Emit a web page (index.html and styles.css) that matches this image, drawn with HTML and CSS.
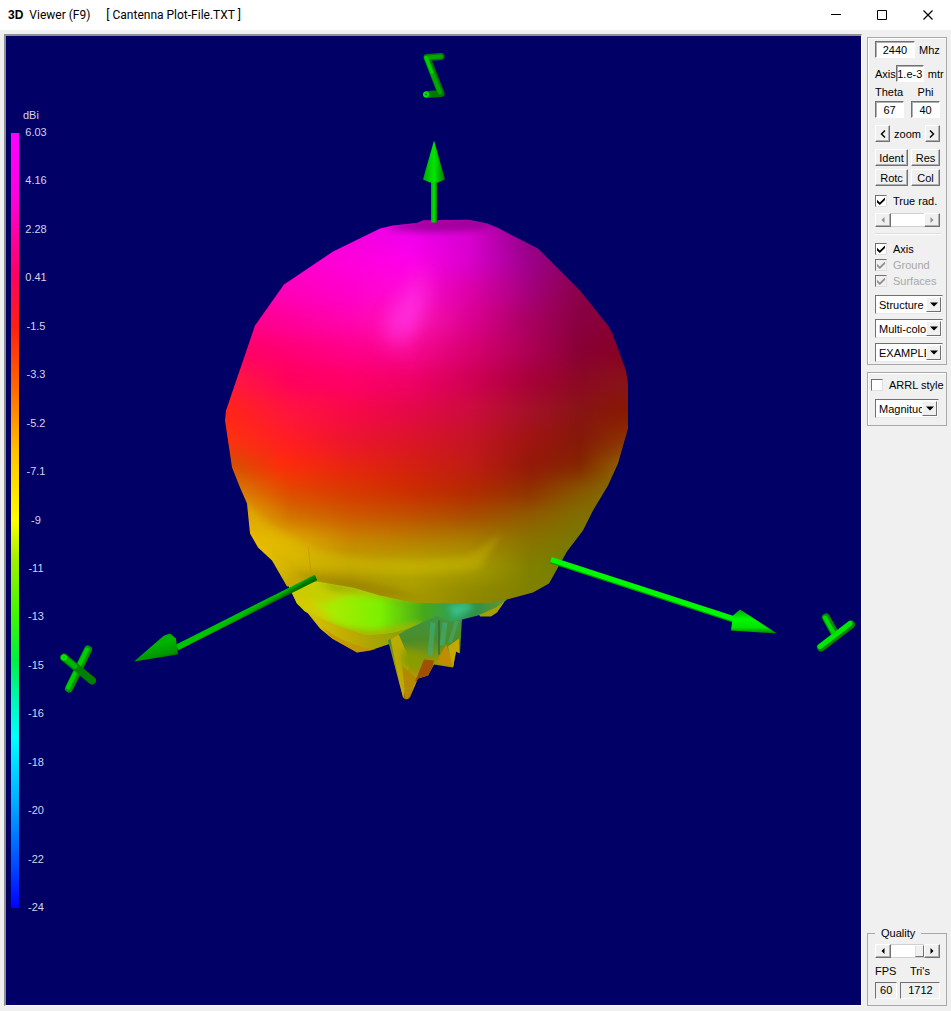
FILE: index.html
```html
<!DOCTYPE html>
<html lang="en">
<head>
<meta charset="utf-8">
<title>3D Viewer (F9)</title>
<link rel="stylesheet" href="styles.css">
</head>
<body>
<header class="titlebar">
  <span class="logo">3D</span>
  <h1 class="title">Viewer (F9)</h1>
  <span class="file">[ Cantenna Plot-File.TXT ]</span>
  <div class="window-buttons">
    <button class="window-button" aria-label="Minimize"><svg width="11" height="11"><path d="M0 4.500H10" stroke="#000"/></svg></button>
    <button class="window-button" aria-label="Maximize"><svg width="11" height="11"><path d="M.5 .5H9.500V9.500H.5Z" stroke="#000" fill="none"/></svg></button>
    <button class="window-button" aria-label="Close"><svg width="11" height="11"><path d="M.5 .5L9.500 9.500M9.500 .5L.5 9.500" stroke="#000" stroke-width="1.200"/></svg></button>
  </div>
</header>
<main class="workspace">
  <section class="plot" aria-label="3D radiation pattern">
    <svg class="scene" viewBox="6 36 855 968" preserveAspectRatio="xMidYMid meet">
      <defs>
        <linearGradient id="r1" gradientUnits="userSpaceOnUse" x1="230" x2="630" y1="0" y2="0"><stop offset="0" stop-color="#ff00c8"/><stop offset=".15" stop-color="#ff00d0"/><stop offset=".3" stop-color="#f000dc"/><stop offset=".45" stop-color="#f000ee"/><stop offset=".6" stop-color="#d800d0"/><stop offset=".75" stop-color="#900080"/><stop offset="1" stop-color="#800050"/></linearGradient>
        <linearGradient id="r2" href="#r1"><stop offset="0" stop-color="#ff00b8"/><stop offset=".15" stop-color="#ff00cc"/><stop offset=".3" stop-color="#ff00dc"/><stop offset=".45" stop-color="#ff00ea"/><stop offset=".6" stop-color="#d800cc"/><stop offset=".75" stop-color="#9c008c"/><stop offset=".875" stop-color="#850055"/></linearGradient>
        <linearGradient id="r3" href="#r1"><stop offset="0" stop-color="#ff00a0"/><stop offset=".15" stop-color="#ff00bc"/><stop offset=".3" stop-color="#ff00cc"/><stop offset=".45" stop-color="#ff0cd8"/><stop offset=".6" stop-color="#dc00a8"/><stop offset=".75" stop-color="#a4007c"/><stop offset=".875" stop-color="#8a0048"/></linearGradient>
        <linearGradient id="r4" href="#r1"><stop offset="0" stop-color="#ff0080"/><stop offset=".15" stop-color="#ff009c"/><stop offset=".3" stop-color="#ff04b0"/><stop offset=".45" stop-color="#ff18b8"/><stop offset=".6" stop-color="#dc0090"/><stop offset=".75" stop-color="#a80060"/><stop offset=".875" stop-color="#880040"/><stop offset="1" stop-color="#880030"/></linearGradient>
        <linearGradient id="r5" href="#r1"><stop offset="0" stop-color="#ff0060"/><stop offset=".15" stop-color="#ff0074"/><stop offset=".3" stop-color="#ff0088"/><stop offset=".45" stop-color="#f80890"/><stop offset=".6" stop-color="#d80070"/><stop offset=".75" stop-color="#ac0054"/><stop offset=".875" stop-color="#880034"/><stop offset="1" stop-color="#880020"/></linearGradient>
        <linearGradient id="r6" href="#r1"><stop offset="0" stop-color="#ff1a40"/><stop offset=".15" stop-color="#ff005c"/><stop offset=".3" stop-color="#ff0068"/><stop offset=".45" stop-color="#f00068"/><stop offset=".6" stop-color="#d00054"/><stop offset=".75" stop-color="#a80038"/><stop offset=".875" stop-color="#8c0824"/><stop offset="1" stop-color="#881418"/></linearGradient>
        <linearGradient id="r7" href="#r1"><stop offset="0" stop-color="#ff2418"/><stop offset=".15" stop-color="#ff1440"/><stop offset=".3" stop-color="#f80848"/><stop offset=".45" stop-color="#e40848"/><stop offset=".6" stop-color="#cc0c3c"/><stop offset=".75" stop-color="#a41028"/><stop offset=".875" stop-color="#881414"/><stop offset="1" stop-color="#881800"/></linearGradient>
        <linearGradient id="r8" href="#r1"><stop offset="0" stop-color="#ff3010"/><stop offset=".15" stop-color="#ff1c24"/><stop offset=".3" stop-color="#ec1430"/><stop offset=".45" stop-color="#dc1428"/><stop offset=".6" stop-color="#c41424"/><stop offset=".75" stop-color="#a01410"/><stop offset=".875" stop-color="#841808"/><stop offset="1" stop-color="#8c3400"/></linearGradient>
        <linearGradient id="r9" href="#r1"><stop offset="0" stop-color="#d05000"/><stop offset=".13" stop-color="#ff2c08"/><stop offset=".3" stop-color="#e82410"/><stop offset=".45" stop-color="#d42010"/><stop offset=".6" stop-color="#c01c14"/><stop offset=".75" stop-color="#941808"/><stop offset=".875" stop-color="#842400"/><stop offset="1" stop-color="#907000"/></linearGradient>
        <linearGradient id="r10" href="#r1"><stop offset="0" stop-color="#d88000"/><stop offset=".15" stop-color="#e04800"/><stop offset=".3" stop-color="#d83800"/><stop offset=".45" stop-color="#cc2c00"/><stop offset=".6" stop-color="#b42800"/><stop offset=".75" stop-color="#903000"/><stop offset=".875" stop-color="#885800"/><stop offset="1" stop-color="#807800"/></linearGradient>
        <linearGradient id="r11" href="#r1"><stop offset="0" stop-color="#e8c000"/><stop offset=".06" stop-color="#dca000"/><stop offset=".15" stop-color="#d07000"/><stop offset=".3" stop-color="#cc5800"/><stop offset=".45" stop-color="#c05000"/><stop offset=".6" stop-color="#a84c00"/><stop offset=".75" stop-color="#905c00"/><stop offset=".875" stop-color="#807000"/></linearGradient>
        <linearGradient id="r12" href="#r1"><stop offset="0" stop-color="#f0c800"/><stop offset=".15" stop-color="#e0b000"/><stop offset=".3" stop-color="#c88800"/><stop offset=".45" stop-color="#b88000"/><stop offset=".6" stop-color="#a88000"/><stop offset=".75" stop-color="#887400"/><stop offset=".875" stop-color="#787800"/></linearGradient>
        <linearGradient id="r13" href="#r1"><stop offset="0" stop-color="#f0d000"/><stop offset=".15" stop-color="#d4b400"/><stop offset=".3" stop-color="#bca400"/><stop offset=".45" stop-color="#b8a800"/><stop offset=".6" stop-color="#aca000"/><stop offset=".75" stop-color="#808000"/><stop offset=".85" stop-color="#708000"/></linearGradient>
        <linearGradient id="r14" href="#r1"><stop offset="0" stop-color="#e0cc00"/><stop offset=".15" stop-color="#c0a400"/><stop offset=".3" stop-color="#a49000"/><stop offset=".45" stop-color="#a89c00"/><stop offset=".6" stop-color="#908800"/><stop offset=".75" stop-color="#808000"/></linearGradient>
        <linearGradient id="lobe" gradientUnits="userSpaceOnUse" x1="290" y1="0" x2="505" y2="0"><stop offset="0" stop-color="#dcd800"/><stop offset=".2" stop-color="#a8ec00"/><stop offset=".42" stop-color="#7cf000"/><stop offset=".62" stop-color="#48a818"/><stop offset=".76" stop-color="#30a058"/><stop offset=".86" stop-color="#309048"/><stop offset="1" stop-color="#609830"/></linearGradient>
        <linearGradient id="under" x1="0" y1="0" x2="1" y2="0"><stop offset="0" stop-color="#e4cc00"/><stop offset=".5" stop-color="#b8a800"/><stop offset="1" stop-color="#709c10"/></linearGradient>
        <linearGradient id="spike" x1="0" y1="0" x2="0" y2="1"><stop offset="0" stop-color="#389850"/><stop offset=".35" stop-color="#4c8c28"/><stop offset=".6" stop-color="#a09c00"/><stop offset=".8" stop-color="#c89800"/><stop offset="1" stop-color="#985400"/></linearGradient>
        <linearGradient id="shaftX" gradientUnits="userSpaceOnUse" x1="244.500" y1="610.500" x2="248" y2="616.500"><stop offset="0" stop-color="#00c400"/><stop offset=".5" stop-color="#00ac00"/><stop offset="1" stop-color="#007000"/></linearGradient>
        <linearGradient id="shaftZ"><stop offset="0" stop-color="#00a800"/><stop offset=".5" stop-color="#00e800"/><stop offset="1" stop-color="#007800"/></linearGradient>
        <linearGradient id="coneY" x1="0" y1="0" x2="0" y2="1"><stop offset="0" stop-color="#00a800"/><stop offset=".4" stop-color="#00f800"/><stop offset=".75" stop-color="#00e400"/><stop offset="1" stop-color="#008000"/></linearGradient>
        <linearGradient id="coneX" x1="0" y1="0" x2=".4" y2="1"><stop offset="0" stop-color="#00a400"/><stop offset=".5" stop-color="#00b400"/><stop offset=".9" stop-color="#009400"/><stop offset="1" stop-color="#006800"/></linearGradient>
        <filter id="mesh" color-interpolation-filters="sRGB" filterUnits="userSpaceOnUse" x="100" y="100" width="660" height="620"><feGaussianBlur stdDeviation="0 10"/></filter>
        <filter id="soft" color-interpolation-filters="sRGB" x="-50%" y="-50%" width="200%" height="200%"><feGaussianBlur stdDeviation="9"/></filter>
        <filter id="fine" color-interpolation-filters="sRGB" x="-40%" y="-60%" width="180%" height="220%"><feGaussianBlur stdDeviation="3"/></filter>
        <clipPath id="bodyClip"><path d="M423 220L450 219.500L467 219L487 223L497 227L538 248L580 290L608 325L612 332L626 370L628 383V428L618 463L608 485L593 510L587 522L583 530L567 551L558 567L549 583L533 592L507 599L487 603H433L413 602L380 595L353 587L317 581L287 586L272 560L258 547L250 533L247 503L240 487L232 467L225 420L226 410L255 325L284 284L333 251L380 228L393 225L417 222.500Z"/></clipPath>
        <clipPath id="lobeClip"><path d="M284 576L353 580L433 596L510 590L506 600L496 607L478 615L462 619L450 621L437 615L420 623Q396 635 365 634L340 626L316 616L305 611L297 603Z"/></clipPath>
        <clipPath id="spikeClip"><path d="M388 640L437 612L462 618L460 653L456 651L453 667L434 664L428 675L418 678L410 697Q406 701 403 697Z"/></clipPath>
      </defs>

      <!-- back lobe -->
      <path d="M287 580L297 603L308 613L320 628L332 638L357 652L370 650L391 643L400 640L430 610Z" fill="url(#under)"/>
      <path d="M322 626L332 638L357 652L376 649Q345 645 322 626Z" fill="#c88800" opacity=".6"/>
      <path d="M478 612L506 595L504 602L497 612L491 616L480 616Z" fill="#a8a000"/>

      <!-- tail -->
      <g clip-path="url(#spikeClip)">
        <rect x="380" y="605" width="90" height="100" fill="url(#spike)"/>
        <path d="M390 636L403 699L410 660L397 630Z" fill="#bcac00"/>
        <path d="M402 665L417 678L406 702Z" fill="#b48800"/>
        <path d="M402 665L420 673L425 655L402 648Z" fill="#889c00" filter="url(#fine)"/>
        <path d="M424 659L434 660L430 677L415 681Z" fill="#a05000"/>
        <path d="M436 662L446 644L455 667Z" fill="#c08c00"/>
        <path d="M448 646L459 638V655L453 667Z" fill="#c4a800"/>
        <path d="M433 622L430 655M445 622L442 645" stroke="#3cb080" stroke-width="5" opacity=".6"/>
        <path d="M439 620L439 654" stroke="#286c40" stroke-width="2" opacity=".7"/>
        <path d="M457 620L450 642" stroke="#48a468" stroke-width="4" opacity=".7"/>
      </g>

      <!-- side lobe ring -->
      <g clip-path="url(#lobeClip)">
        <rect x="270" y="570" width="245" height="75" fill="url(#lobe)"/>
        <path d="M280 582L335 580L430 600L350 594L325 602L290 600Z" fill="#c8c800" filter="url(#fine)" opacity=".8"/>
        <path d="M292 603Q330 630 375 630L418 622L424 628L365 642L300 630Z" fill="#a8b400" filter="url(#fine)"/>
        <path d="M290 590L312 600L335 622L300 615Z" fill="#d8c400" filter="url(#fine)" opacity=".7"/>
        <path d="M317 581L353 587L413 602L400 601L365 592L335 590Z" fill="#889800" filter="url(#fine)" opacity=".7"/>
        <path d="M448 606L465 602L475 606L455 618Z" fill="#38c088" filter="url(#fine)"/>
      </g>

      <!-- main body -->
      <g clip-path="url(#bodyClip)">
        <g filter="url(#mesh)">
          <rect x="180" y="160" width="500" height="88" fill="url(#r1)"/>
          <rect x="180" y="247" width="500" height="29" fill="url(#r2)"/>
          <rect x="180" y="275" width="500" height="31" fill="url(#r3)"/>
          <rect x="180" y="305" width="500" height="31" fill="url(#r4)"/>
          <rect x="180" y="335" width="500" height="31" fill="url(#r5)"/>
          <rect x="180" y="365" width="500" height="31" fill="url(#r6)"/>
          <rect x="180" y="395" width="500" height="31" fill="url(#r7)"/>
          <rect x="180" y="425" width="500" height="29" fill="url(#r8)"/>
          <rect x="180" y="453" width="500" height="26" fill="url(#r9)"/>
          <rect x="180" y="478" width="500" height="26" fill="url(#r10)"/>
          <rect x="180" y="503" width="500" height="26" fill="url(#r11)"/>
          <rect x="180" y="528" width="500" height="26" fill="url(#r12)"/>
          <rect x="180" y="553" width="500" height="26" fill="url(#r13)"/>
          <rect x="180" y="578" width="500" height="80" fill="url(#r14)"/>
        </g>
        <path d="M426 260L430 300L404 350L380 340L396 305Z" fill="#ff30d8" opacity=".5" filter="url(#soft)"/>
        <path d="M420 285L416 318L402 334L386 322L400 304Z" fill="#ff38f0" opacity=".5" filter="url(#soft)"/>
        <path d="M385 228L423 217L470 216L497 226L485 229Q430 235 385 228Z" fill="#90008c" opacity=".75" filter="url(#fine)"/>
        <path d="M245 500Q268 532 325 551Q400 565 470 555L502 532L480 568Q390 582 300 563Q255 545 245 500Z" fill="#e0cc00" opacity=".25" filter="url(#fine)"/>
        <path d="M290 572Q350 577 390 587L430 600L350 592Z" fill="#988000" opacity=".6" filter="url(#fine)"/>
        <path d="M308 546L311 572" stroke="#b88000" opacity=".35" fill="none"/>
      </g>

      <!-- X axis -->
      <path d="M177 647L316 577" stroke="url(#shaftX)" stroke-width="6"/>
      <path d="M134 661L164 635L170 633L176 638L178 654Z" fill="url(#coneX)"/>
      <g fill="none" stroke-linecap="round">
        <path d="M88 649L69 688" stroke="#009400" stroke-width="8"/>
        <path d="M87 649L68 687" stroke="#00d000" stroke-width="4"/>
        <path d="M64 657L92 680" stroke="#008000" stroke-width="8"/>
        <path d="M64 657L75 666" stroke="#00b400" stroke-width="5"/>
        <circle cx="64" cy="657" r="1" stroke="#00f000" stroke-width="4"/>
      </g>

      <!-- Y axis -->
      <path d="M551 560L736 620" stroke="#00a000" stroke-width="6"/>
      <path d="M551 559L736 619" stroke="#00f800" stroke-width="5"/>
      <path d="M777 633L740 609L733 615L731 630Z" fill="url(#coneY)"/>
      <g fill="none" stroke-linecap="round">
        <path d="M826 617L836 635" stroke="#008c00" stroke-width="8"/>
        <path d="M825 617L835 635" stroke="#00dc00" stroke-width="4"/>
        <path d="M821 647L851 624" stroke="#008800" stroke-width="8"/>
        <path d="M820 646L850 623" stroke="#00e800" stroke-width="5"/>
      </g>

      <!-- Z axis -->
      <rect x="431" y="180" width="6" height="42" fill="url(#shaftZ)"/>
      <path d="M434 140L423 179L430 182H438L445 179Z" fill="url(#shaftZ)"/>
      <g fill="none" stroke-linecap="round" stroke-linejoin="round">
        <path d="M441 56L427 57L441 93L427 94" stroke="#007800" stroke-width="7"/>
        <path d="M441 56L426 57L440 92" stroke="#00a800" stroke-width="4"/>
        <path d="M426 57L432 72" stroke="#00d000" stroke-width="3"/>
        <circle cx="426" cy="94" r="1" stroke="#00e800" stroke-width="4"/>
      </g>
    </svg>
    <div class="scale">
      <div class="scale-unit">dBi</div>
      <div class="scale-bar"></div>
      <ol class="scale-labels">
        <li>6.03</li><li>4.16</li><li>2.28</li><li>0.41</li><li>-1.5</li><li>-3.3</li><li>-5.2</li><li>-7.1</li><li>-9</li><li>-11</li><li>-13</li><li>-15</li><li>-16</li><li>-18</li><li>-20</li><li>-22</li><li>-24</li>
      </ol>
    </div>
  </section>

  <aside class="sidebar">
    <section class="group">
      <div class="row"><input class="field field-wide" id="mhz" value="2440"><label for="mhz">Mhz</label></div>
      <div class="row row-axis"><label for="axis-len">Axis</label><input class="field field-axis" id="axis-len" value="1.e-3"><span class="unit">mtr</span></div>
      <div class="angles">
        <label for="theta">Theta</label><label class="phi" for="phi">Phi</label>
        <input class="field" id="theta" value="67"><input class="field" id="phi" value="40">
      </div>
      <div class="row row-zoom"><button class="button step" aria-label="Zoom out"><svg width="6" height="8"><path d="M5 .5L1.500 4L5 7.500" stroke="#000" stroke-width="1.400" fill="none"/></svg></button><span>zoom</span><button class="button step" aria-label="Zoom in"><svg width="6" height="8"><path d="M1 .5L4.500 4L1 7.500" stroke="#000" stroke-width="1.400" fill="none"/></svg></button></div>
      <div class="commands">
        <button class="button">Ident</button><button class="button">Res</button>
        <button class="button">Rotc</button><button class="button">Col</button>
      </div>
      <label class="check check-rad"><input type="checkbox" checked>True rad.</label>
      <div class="scroll">
        <button class="button arrow" disabled aria-label="Decrease radius"><svg width="4" height="6"><path d="M3.500 0V6L.5 3Z" fill="#909090"/></svg></button>
        <input class="slider" type="range" disabled aria-label="Radius">
        <button class="button arrow" disabled aria-label="Increase radius"><svg width="4" height="6"><path d="M.5 0V6L3.500 3Z" fill="#909090"/></svg></button>
      </div>
      <hr class="divider">
      <div class="checks">
        <label class="check"><input type="checkbox" checked>Axis</label>
        <label class="check off"><input type="checkbox" checked disabled>Ground</label>
        <label class="check off"><input type="checkbox" checked disabled>Surfaces</label>
      </div>
      <div class="selects">
        <div class="drop"><select aria-label="Structure"><option>Structure</option></select><span class="drop-arrow"></span></div>
        <div class="drop"><select aria-label="Colors"><option>Multi-color</option></select><span class="drop-arrow"></span></div>
        <div class="drop"><select aria-label="Example file"><option>EXAMPLE</option></select><span class="drop-arrow"></span></div>
      </div>
    </section>

    <section class="group group-style">
      <label class="check"><input type="checkbox">ARRL style</label>
      <div class="drop drop-short"><select aria-label="Quantity"><option>Magnitude</option></select><span class="drop-arrow"></span></div>
    </section>

    <fieldset class="quality">
      <legend>Quality</legend>
      <div class="scroll">
        <button class="button arrow" aria-label="Lower quality"><svg width="4" height="6"><path d="M3.500 0V6L.5 3Z"/></svg></button>
        <input class="slider" type="range" value="100" aria-label="Quality">
        <button class="button arrow" aria-label="Raise quality"><svg width="4" height="6"><path d="M.5 0V6L3.500 3Z"/></svg></button>
      </div>
      <dl class="stats">
        <div><dt>FPS</dt><dd>60</dd></div>
        <div class="tris"><dt>Tri's</dt><dd>1712</dd></div>
      </dl>
    </fieldset>
  </aside>
</main>
</body>
</html>
```
FILE: styles.css
```css
* { box-sizing: border-box; }

body {
  display: flex;
  flex-direction: column;
  height: 100vh;
  margin: 0;
  background: #f0f0f0;
  color: #000;
  font: 11px/14px "Liberation Sans", Arial, sans-serif;
}

button, input, select { font: inherit; color: inherit; margin: 0; border-radius: 0; }

.titlebar {
  display: flex;
  align-items: center;
  height: 30px;
  padding-left: 8px;
  background: #fff;
  font-family: Roboto, "Open Sans", sans-serif;
}
.logo { font: bold 12px/16px "Liberation Sans", Arial, sans-serif; }
.title { margin: 0 16px 0 6px; font-size: 12px; font-weight: 400; }
.file { font-size: 12px; }
.window-buttons { display: flex; margin-left: auto; }
.window-button {
  display: grid;
  place-items: center;
  width: 46px;
  height: 29px;
  padding: 0;
  border: 0;
  background: none;
}

.workspace {
  display: flex;
  flex: 1;
  gap: 5px;
  min-height: 0;
  padding: 4px 4px 5px;
}

.plot {
  position: relative;
  flex: 1;
  min-width: 0;
  border: 2px solid;
  border-color: #909090 #fff #fff #909090;
  border-width: 2px 1px 1px 2px;
  background: #000066;
}
.scene { display: block; width: 100%; height: 100%; }

.scale {
  position: absolute;
  top: 72px;
  bottom: 91px;
  left: 5px;
  display: grid;
  grid-template: 17px 1fr / 8px 22px;
  column-gap: 6px;
  color: #d4d4ec;
}
.scale-unit { grid-column: 2; margin-left: -2px; }
.scale-bar {
  grid-column: 1;
  margin: 8px 0 6px;
  background: linear-gradient(#ff00ff 0, #ff00e0 8%, #ff0066 18%, #ff2010 25%, #ff6000 32%, #ffc000 41%, #ffff00 50%, #a0f000 55%, #40f800 62%, #00f040 68%, #00f8b0 73%, #00ffff 78%, #00b0ff 86%, #0050ff 94%, #0000ff 100%);
}
.scale-labels {
  display: flex;
  flex-direction: column;
  justify-content: space-between;
  margin: 0;
  padding: 0;
  list-style: none;
  text-align: center;
}

.sidebar { display: flex; flex-direction: column; width: 80px; padding-top: 3px; white-space: nowrap; }
.group { padding: 3px 3px 2px 7px; border: 1px solid #a8a8a8; box-shadow: inset 1px 1px #fff; }
.row { display: flex; align-items: center; gap: 4px; }
.row-axis { gap: 0; margin-top: 7px; }
.row-zoom { justify-content: space-between; width: 65px; margin-top: 7px; }
.unit { margin-left: 4px; }
.field {
  width: 29px;
  height: 17px;
  padding: 0;
  border: 1px solid;
  border-color: #707070 #fff #fff #707070;
  background: #fff;
  text-align: center;
  box-shadow: inset 1px 1px #b0b0b0;
}
.field-wide { width: 40px; }
.field-axis { width: 28px; }
.angles { display: grid; grid-template-columns: 29px 29px; gap: 2px 7px; margin-top: 3px; }
.phi { text-align: center; }

.button {
  display: grid;
  place-items: center;
  padding: 0;
  height: 17px;
  border: 1px solid;
  border-color: #fff #707070 #707070 #fff;
  background: #f0f0f0;
  box-shadow: inset -1px -1px #b0b0b0;
}
.step { width: 17px; }
.commands { display: grid; grid-template-columns: 33px 29px; gap: 3px; margin-top: 7px; }

.check { display: flex; align-items: center; gap: 6px; height: 16px; }
.check-rad { margin-top: 7px; }
.check input {
  flex: none;
  width: 12px;
  height: 12px;
  appearance: none;
  border: 1px solid;
  border-color: #707070 #e0e0e0 #e0e0e0 #707070;
  background: #fff;
  display: grid;
  place-items: center;
}
.check input:checked::before {
  content: "";
  width: 8px;
  height: 8px;
  background: #000;
  clip-path: polygon(0 35%, 35% 68%, 100% 5%, 100% 38%, 35% 100%, 0 68%);
}
.off { color: #a8a8a8; }
.off input { background: #f0f0f0; }
.off input:checked::before { background: #909090; }

.scroll { display: flex; width: 65px; margin-top: 4px; }
.arrow { flex: none; width: 16px; height: 14px; }
.slider { flex: 1; min-width: 0; height: 14px; appearance: none; background: #fff; border: solid #d0d0d0; border-width: 1px 0; }
.slider::-webkit-slider-thumb { appearance: none; width: 9px; height: 12px; border: 1px solid; border-color: #fff #707070 #707070 #e0e0e0; background: #f0f0f0; }
.slider:disabled::-webkit-slider-thumb { visibility: hidden; }

.divider { width: 66px; margin: 6px 0; border: 0; border-top: 1px solid #dcdcdc; border-bottom: 1px solid #fff; }
.selects { display: grid; gap: 5px; margin-top: 6px; }
.drop { position: relative; width: 68px; height: 19px; }
.drop-short { width: 64px; }
.drop select {
  width: 100%;
  height: 100%;
  padding: 0 16px 0 3px;
  appearance: none;
  border: 1px solid;
  border-color: #707070 #e8e8e8 #e8e8e8 #707070;
  background: #fff;
}
.drop-arrow {
  position: absolute;
  top: 2px;
  right: 2px;
  bottom: 2px;
  width: 15px;
  border: 1px solid;
  border-color: #fff #707070 #707070 #fff;
  background: #f0f0f0;
  pointer-events: none;
}
.drop-arrow::before {
  content: "";
  position: absolute;
  inset: 4px 2px 4px 3px;
  background: #000;
  clip-path: polygon(0 10%, 100% 10%, 50% 90%);
}

.group-style { margin-top: 7px; padding: 4px 3px 7px; }
.group-style .drop { margin: 6px 0 0 4px; }

.quality { min-width: 0; margin: auto 0 0; padding: 0 0 6px 7px; border: 1px solid #a8a8a8; }
.quality legend { padding: 0 6px; }
.stats { display: flex; gap: 3px; margin: 6px 0 0; text-align: center; }
.tris { width: 40px; }
.stats dt { padding-right: 1px; }
.stats dd {
  margin: 4px 0 0;
  height: 17px;
  min-width: 20px;
  border: 1px solid;
  border-color: #707070 #fff #fff #707070;
}
```
